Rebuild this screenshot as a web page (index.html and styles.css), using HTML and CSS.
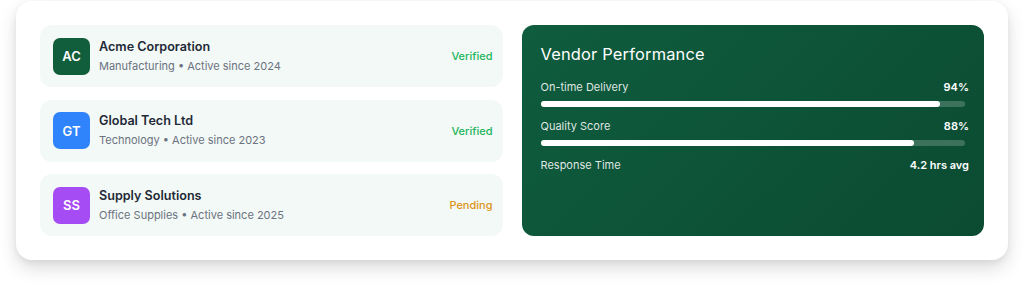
FILE: index.html
```html
<!DOCTYPE html>
<html lang="en">
<head>
  <meta charset="UTF-8">
  <title>Vendors</title>
  <link rel="stylesheet" href="styles.css">
</head>
<body>
  <div class="card">
    <div class="vendor-list">
      <div class="vendor">
        <div class="avatar avatar-green">AC</div>
        <div class="vendor-info">
          <div class="vendor-name">Acme Corporation</div>
          <div class="vendor-meta">Manufacturing • Active since 2024</div>
        </div>
        <div class="status status-verified">Verified</div>
      </div>
      <div class="vendor">
        <div class="avatar avatar-blue">GT</div>
        <div class="vendor-info">
          <div class="vendor-name">Global Tech Ltd</div>
          <div class="vendor-meta">Technology • Active since 2023</div>
        </div>
        <div class="status status-verified">Verified</div>
      </div>
      <div class="vendor">
        <div class="avatar avatar-purple">SS</div>
        <div class="vendor-info">
          <div class="vendor-name">Supply Solutions</div>
          <div class="vendor-meta">Office Supplies • Active since 2025</div>
        </div>
        <div class="status status-pending">Pending</div>
      </div>
    </div>

    <div class="performance">
      <h3>Vendor Performance</h3>
      <div class="metric">
        <div class="metric-row">
          <span>On-time Delivery</span>
          <strong>94%</strong>
        </div>
        <div class="bar"><div class="bar-fill" style="width: 94%"></div></div>
      </div>
      <div class="metric">
        <div class="metric-row">
          <span>Quality Score</span>
          <strong>88%</strong>
        </div>
        <div class="bar"><div class="bar-fill" style="width: 88%"></div></div>
      </div>
      <div class="metric">
        <div class="metric-row">
          <span>Response Time</span>
          <strong>4.2 hrs avg</strong>
        </div>
      </div>
    </div>
  </div>
</body>
</html>
```

FILE: styles.css
```css
body {
  font-family: Inter, 'Noto Sans', sans-serif;
  margin: 0;
  padding: 1px 16px 40px;
  background: #ffffff;
  color: #1f2937;
}

.card {
  background: #ffffff;
  border-radius: 16px;
  padding: 24px;
  display: grid;
  grid-template-columns: 1fr 1fr;
  gap: 19px;
  box-shadow: 0 8px 18px rgba(0, 0, 0, 0.14), 0 2px 6px rgba(0, 0, 0, 0.06);
}

.vendor-list {
  display: flex;
  flex-direction: column;
  gap: 12.5px;
}

.vendor {
  display: flex;
  align-items: center;
  gap: 9px;
  height: 62px;
  padding: 0 10px 0 13px;
  box-sizing: border-box;
  background: #f3f9f6;
  border-radius: 12px;
}

.avatar {
  width: 37px;
  height: 37px;
  border-radius: 7px;
  display: flex;
  align-items: center;
  justify-content: center;
  color: #ffffff;
  font-size: 13px;
  font-weight: 600;
  flex-shrink: 0;
}

.avatar-green {
  background: #115e3c;
}

.avatar-blue {
  background: #3084fb;
}

.avatar-purple {
  background: #a64cf5;
}

.vendor-info {
  flex: 1;
}

.vendor-name {
  font-size: 12.6px;
  font-weight: 600;
  color: #1f2937;
  line-height: 18px;
}

.vendor-meta {
  font-size: 11px;
  color: #6b7280;
  margin-top: 1px;
  line-height: 18px;
}

.status {
  font-size: 11px;
  font-weight: 500;
}

.status-verified {
  color: #22b55a;
}

.status-pending {
  color: #db9418;
}

.performance {
  background: linear-gradient(135deg, #0f5c3e, #0b4b32);
  border-radius: 12px;
  padding: 18px 15px 20px 19px;
  color: #ffffff;
}

.performance h3 {
  margin: 0 0 14px;
  font-size: 16.4px;
  font-weight: 400;
  line-height: 22px;
  letter-spacing: 0.2px;
}

.metric {
  margin-bottom: 11px;
}

.metric-row {
  display: flex;
  justify-content: space-between;
  font-size: 11px;
  line-height: 16px;
  color: rgba(255, 255, 255, 0.88);
}

.metric-row strong {
  font-weight: 600;
  color: #ffffff;
}

.bar {
  height: 6px;
  margin-top: 6px;
  background: rgba(255, 255, 255, 0.2);
  border-radius: 3px;
  margin-right: 4px;
}

.bar-fill {
  height: 100%;
  background: #ffffff;
  border-radius: 3px;
}
```
